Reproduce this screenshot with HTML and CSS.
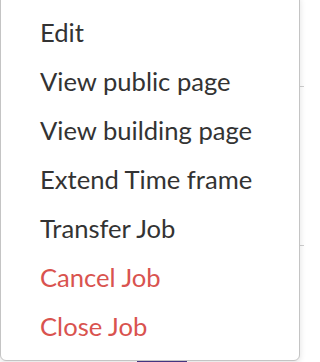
FILE: index.html
```html
<!DOCTYPE html>
<html>
<head>
<meta charset="utf-8">
<link rel="stylesheet" href="styles.css">
</head>
<body>
<div class="page">
  <div class="row row-a"></div>
  <div class="row row-b"></div>
  <div class="row row-c"><span class="tab"></span></div>
</div>
<ul class="menu">
  <li class="item">Edit</li>
  <li class="item">View public page</li>
  <li class="item">View building page</li>
  <li class="item">Extend Time frame</li>
  <li class="item">Transfer Job</li>
  <li class="item danger">Cancel Job</li>
  <li class="item danger">Close Job</li>
</ul>
</body>
</html>
```
FILE: styles.css
```css
html, body {
  margin: 0;
  padding: 0;
  background: #ffffff;
  width: 304px;
  height: 362px;
  overflow: hidden;
  font-family: Lato, "Liberation Sans", sans-serif;
}
.page {
  display: flex;
  flex-direction: column;
}
.row {
  border-bottom: 1px solid #cfcfcf;
}
.row-a { height: 86px; }
.row-b { height: 158px; }
.row-c {
  height: 116px;
  border-bottom: none;
  position: relative;
}
.tab {
  position: absolute;
  left: 137px;
  bottom: 0;
  width: 50px;
  height: 2px;
  background: #4a3a8c;
}
.menu {
  position: absolute;
  left: 0;
  top: -6px;
  width: 300px;
  height: 367px;
  margin: 0;
  padding: 13px 0 0 0;
  list-style: none;
  box-sizing: border-box;
  background: #ffffff;
  border: 1px solid #c4c4c4;
  border-radius: 6px;
  box-shadow: 0 2px 6px rgba(0,0,0,0.12);
}
.item {
  padding-left: 39px;
  height: 49px;
  line-height: 49px;
  font-size: 25.6px;
  color: #333333;
  white-space: nowrap;
}
.danger {
  color: #d9534f;
}
```
